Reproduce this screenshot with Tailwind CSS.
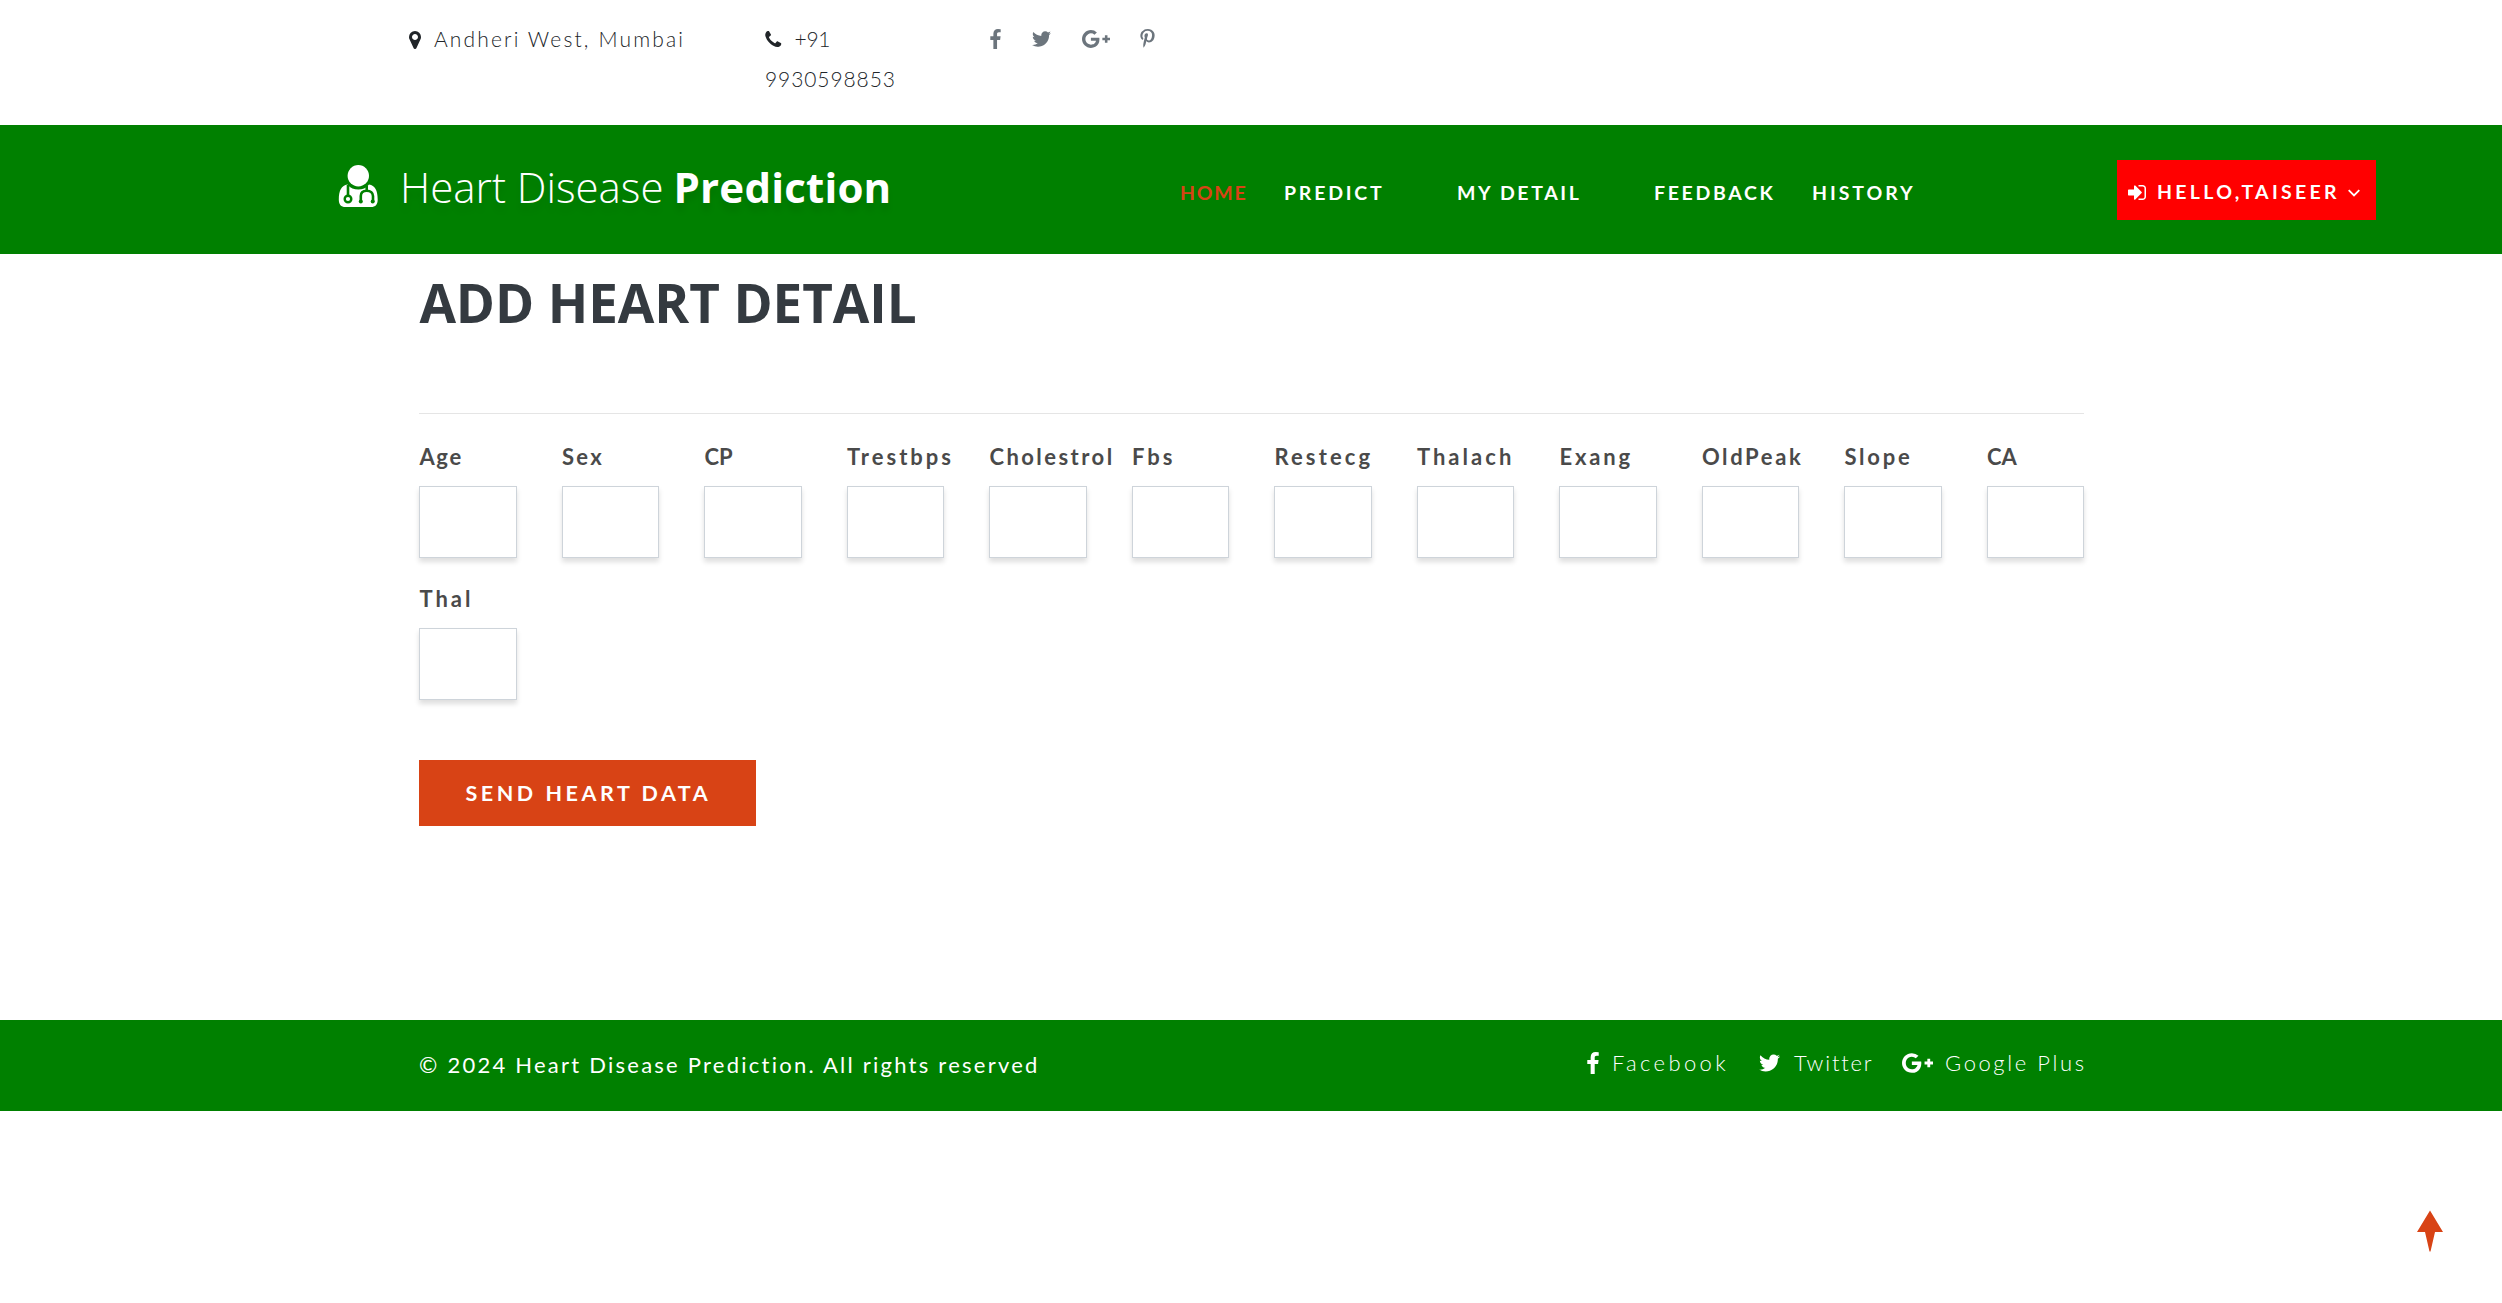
<!DOCTYPE html>
<html lang="en">
<head>
<meta charset="utf-8">
<title>Heart Disease Prediction</title>
<script src="https://cdn.jsdelivr.net/npm/@tailwindcss/browser@4"></script>
</head>
<body class="min-h-screen bg-white font-['Lato',sans-serif] text-[#4a4a4a] overflow-x-hidden">
<svg class="hidden">
  <symbol id="facebook" viewBox="479 0 864 1664"><path d="M1343 12v264h-157q-86 0-116 36t-30 108v189h293l-39 296h-254v759h-306v-759h-255v-296h255v-218q0-186 104-288.5t277-102.5q147 0 228 12z"/></symbol>
  <symbol id="twitter" viewBox="108 256 1576 1280"><path d="M1684 408q-67 98-162 167 1 14 1 42 0 130-38 259.5t-115.5 248.5-184.5 210.5-258 146-323 54.5q-271 0-496-145 35 4 78 4 225 0 401-138-105-2-188-64.5t-114-159.5q33 5 61 5 43 0 85-11-112-23-185.5-111.5t-73.5-205.5v-4q68 38 146 41-66-44-105-115t-39-154q0-88 44-163 121 149 294.5 238.5t371.5 99.5q-8-38-8-74 0-134 94.5-228.5t228.5-94.5q140 0 236 102 109-21 205-78-37 115-142 178 93-10 186-50z"/></symbol>
  <symbol id="gplus" viewBox="0 163 2304 1466"><path d="M1437 913q0 208-87 370.5t-248 254-369 91.5q-149 0-285-58t-234-156-156-234-58-285 58-285 156-234 234-156 285-58q286 0 491 192l-199 191q-117-113-292-113-123 0-227.5 62t-165.5 168.5-61 232.5 61 232.5 165.5 168.5 227.5 62q83 0 152.5-23t114.5-57.5 78.5-78.5 49-83 21.5-74h-416v-252h692q12 63 12 122zm867-122v210h-209v209h-210v-209h-209v-210h209v-209h210v209h209z"/></symbol>
</svg>

<!-- Contact bar -->
<div class="flex h-[125px] pt-[19px] pl-[409px] text-[21px] leading-[40px] font-light text-[#212529]">
  <div class="flex w-[356px] whitespace-nowrap">
    <svg class="mt-[12px] mr-[13px] h-[18px] w-[12px]" fill="currentColor" viewBox="384 128 1024 1536"><path d="M1152 640q0-106-75-181t-181-75-181 75-75 181 75 181 181 75 181-75 75-181zm256 0q0 109-33 179l-364 774q-16 33-47.5 52t-67.5 19-67.5-19-46.5-52l-365-774q-33-70-33-179 0-212 150-362t362-150 362 150 150 362z"/></svg>
    <span class="tracking-[2.15px]">Andheri West, Mumbai</span>
  </div>
  <div class="w-[225px]">
    <div class="flex h-[40px]">
      <svg class="mt-[12px] mr-[13px] h-[16px] w-[16.5px]" fill="currentColor" viewBox="192 128 1408 1408"><path d="M1600 1240q0 27-10 70.5t-21 68.5q-21 50-122 106-94 51-186 51-27 0-53-3.5t-57.5-12.5-47-14.5-55.5-20.5-49-18q-98-35-175-83-127-79-264-216t-216-264q-48-77-83-175-3-9-18-49t-20.5-55.5-14.5-47-12.5-57.5-3.5-53q0-92 51-186 56-101 106-122 25-11 68.5-21t70.5-10q14 0 21 3 18 6 53 76 11 19 30 54t35 63.5 31 53.5q3 4 17.5 25t21.5 35.5 7 28.5q0 20-28.5 50t-62 55-62 53-28.5 46q0 9 5 22.5t8.5 20.5 14 24 11.5 19q76 137 174 235t235 174q2 1 19 11.5t24 14 20.5 8.5 22.5 5q18 0 46-28.5t53-62 55-62 50-28.5q14 0 28.5 7t35.5 21.5 25 17.5q25 15 53.5 31t63.5 35 54 30q70 35 76 53 3 7 3 21z"/></svg>
      <span class="tracking-[-0.3px]">+91</span>
    </div>
    <div class="tracking-[0.9px]">9930598853</div>
  </div>
  <div class="flex h-[40px] items-center text-[#6c757d]">
    <svg class="h-[20px] w-[11px]" fill="currentColor"><use href="#facebook"/></svg>
    <svg class="ml-[31px] h-[16px] w-[19px]" fill="currentColor"><use href="#twitter"/></svg>
    <svg class="ml-[31px] h-[18px] w-[28px]" fill="currentColor"><use href="#gplus"/></svg>
    <svg class="ml-[30px] h-[20px] w-[15px]" fill="currentColor" viewBox="256 0 1280 1792"><path d="M256 597q0-108 37.5-203.5t103.5-166.5 152-123 185-78 202-26q158 0 294 66.5t221 193.5 85 287q0 96-19 188t-60 177-100 149.5-145 103-189 38.5q-68 0-135-32t-96-88q-10 39-28 112.5t-23.5 95-20.5 71-26 71-32 62.5-46 77.5-62 86.5l-14 5-9-10q-15-157-15-188 0-92 21.5-206.5t66.5-287.5 52-203q-32-65-32-169 0-83 52-156t132-73q61 0 95 40.5t34 102.5q0 66-44 191t-44 187q0 63 45 104.5t109 41.5q55 0 102-25t78.5-68 56-95 38-110.5 20-111 6.5-99.5q0-173-109.5-269.5t-285.5-96.5q-200 0-334 129.5t-134 328.5q0 44 12.5 85t27 65 27 45.5 12.5 30.5q0 28-15 73t-37 45q-2 0-17-3-51-15-90.5-56t-61-94.5-32.5-108-11-106.5z"/></svg>
  </div>
</div>

<!-- Main navigation -->
<header class="flex h-[129px] bg-[#008000] pl-[338px] text-white">
  <a class="flex w-[842px] pt-[32px] font-['Open_Sans',sans-serif] text-[42px] leading-[60px] whitespace-nowrap [text-shadow:0_8px_6px_rgb(0_0_0/0.08)]">
    <svg class="mt-[8px] mr-[22px] h-[43px] w-[40px]" viewBox="0 0 40 43">
      <ellipse cx="20.3" cy="10.7" rx="10.7" ry="10.7" fill="#fff"/>
      <path d="M9.5 19.5C3.5 20.5.8 25.5.8 34.5 .8 39.500 3 42 7.500 42H33C37.500 42 39.700 39.500 39.700 34.500 39.700 25.500 37 20.500 31 19.500 28 23.300 24.500 24.600 20.300 24.600S12.500 23.300 9.500 19.500Z" fill="#fff"/>
      <path d="M10 20V31M28.700 20.500V25.500M22.800 37V31Q22.800 25.700 28.700 25.700T35 31V37" fill="none" stroke="#008000" stroke-width="2.600"/>
      <circle cx="10" cy="34" r="3.300" fill="#fff" stroke="#008000" stroke-width="2.400"/>
      <circle cx="22.800" cy="36.500" r="2" fill="#008000"/><circle cx="34.700" cy="36.500" r="2" fill="#008000"/>
    </svg>
    <span class="font-light">Heart Disease</span><span class="ml-[10px] font-bold tracking-[0.2px]">Prediction</span>
  </a>
  <nav class="flex w-[937px] pt-[48px] text-[19.5px] leading-[40px] font-bold whitespace-nowrap">
    <a class="w-[104px] tracking-[1.75px] text-[#d84315]">HOME</a>
    <a class="w-[173px] tracking-[2.78px]">PREDICT</a>
    <a class="w-[197px] tracking-[2.63px]">MY DETAIL</a>
    <a class="w-[158px] tracking-[2.65px]">FEEDBACK</a>
    <a class="tracking-[2.94px]">HISTORY</a>
  </nav>
  <button class="mt-[35px] flex h-[60px] w-[259px] items-center bg-[#ff0000] pl-[11px] text-[19.5px] font-bold whitespace-nowrap">
    <svg class="mt-[4px] h-[15px] w-[18px]" fill="currentColor" viewBox="128 256 1536 1280"><path d="M1312 896q0 26-19 45l-544 544q-19 19-45 19t-45-19-19-45v-288h-448q-26 0-45-19t-19-45v-384q0-26 19-45t45-19h448v-288q0-26 19-45t45-19 45 19l544 544q19 19 19 45zm352-352v704q0 119-84.5 203.5t-203.5 84.5h-320q-13 0-22.500-9.500t-9.500-22.500q0-4-1-20t-.5-26.500 3-23.500 10-19.500 20.500-6.500h320q66 0 113-47t47-113v-704q0-66-47-113t-113-47h-312l-11.500-1-11.500-3-8-5.500-7-9-2-13.500q0-4-1-20t-.5-26.500 3-23.500 10-19.500 20.500-6.500h320q119 0 203.500 84.500t84.500 203.500z"/></svg>
    <span class="mt-[4px] ml-[11px] w-[191px] text-left tracking-[3.3px]">HELLO,TAISEER</span>
    <svg class="mt-[5px] h-[8px] w-[12px]" viewBox="0 0 12 8" fill="none" stroke="currentColor" stroke-width="1.800"><path d="M.7 1.200L6 6.500L11.300 1.200"/></svg>
  </button>
</header>

<!-- Heart detail form -->
<main class="ml-[419.4px] h-[766px] w-[1665px] pt-[19px]">
  <h1 class="font-['Open_Sans',sans-serif] text-[53px] leading-[60px] font-bold tracking-[-0.1px] text-[#343a40]">ADD HEART DETAIL</h1>
  <hr class="mt-[80px] mb-[26px] border-t border-[#e5e5e5]">
  <form>
    <div class="grid grid-cols-12 gap-x-[45px] gap-y-[24px] text-[22px] leading-[33px] font-bold whitespace-nowrap">
      <label><span class="tracking-[1.65px]">Age</span><input class="mt-[13px] block h-[72px] w-full border border-[#ced4da] bg-white shadow-[0_4px_5px_rgb(0_0_0/0.13)]"></label>
      <label><span class="tracking-[2.4px]">Sex</span><input class="mt-[13px] block h-[72px] w-full border border-[#ced4da] bg-white shadow-[0_4px_5px_rgb(0_0_0/0.13)]"></label>
      <label><span class="tracking-[0px]">CP</span><input class="mt-[13px] block h-[72px] w-full border border-[#ced4da] bg-white shadow-[0_4px_5px_rgb(0_0_0/0.13)]"></label>
      <label><span class="tracking-[3px]">Trestbps</span><input class="mt-[13px] block h-[72px] w-full border border-[#ced4da] bg-white shadow-[0_4px_5px_rgb(0_0_0/0.13)]"></label>
      <label><span class="tracking-[2.45px]">Cholestrol</span><input class="mt-[13px] block h-[72px] w-full border border-[#ced4da] bg-white shadow-[0_4px_5px_rgb(0_0_0/0.13)]"></label>
      <label><span class="tracking-[3px]">Fbs</span><input class="mt-[13px] block h-[72px] w-full border border-[#ced4da] bg-white shadow-[0_4px_5px_rgb(0_0_0/0.13)]"></label>
      <label><span class="tracking-[3.15px]">Restecg</span><input class="mt-[13px] block h-[72px] w-full border border-[#ced4da] bg-white shadow-[0_4px_5px_rgb(0_0_0/0.13)]"></label>
      <label><span class="tracking-[3.03px]">Thalach</span><input class="mt-[13px] block h-[72px] w-full border border-[#ced4da] bg-white shadow-[0_4px_5px_rgb(0_0_0/0.13)]"></label>
      <label><span class="tracking-[2.85px]">Exang</span><input class="mt-[13px] block h-[72px] w-full border border-[#ced4da] bg-white shadow-[0_4px_5px_rgb(0_0_0/0.13)]"></label>
      <label><span class="tracking-[2.6px]">OldPeak</span><input class="mt-[13px] block h-[72px] w-full border border-[#ced4da] bg-white shadow-[0_4px_5px_rgb(0_0_0/0.13)]"></label>
      <label><span class="tracking-[2.75px]">Slope</span><input class="mt-[13px] block h-[72px] w-full border border-[#ced4da] bg-white shadow-[0_4px_5px_rgb(0_0_0/0.13)]"></label>
      <label><span class="tracking-[0px]">CA</span><input class="mt-[13px] block h-[72px] w-full border border-[#ced4da] bg-white shadow-[0_4px_5px_rgb(0_0_0/0.13)]"></label>
      <label><span class="tracking-[3px]">Thal</span><input class="mt-[13px] block h-[72px] w-full border border-[#ced4da] bg-white shadow-[0_4px_5px_rgb(0_0_0/0.13)]"></label>
    </div>
    <button type="button" class="mt-[60px] block h-[66px] w-[337px] bg-[#d84315] pl-[46px] text-left text-[21.5px] font-bold tracking-[3.55px] text-white whitespace-nowrap">SEND HEART DATA</button>
  </form>
</main>

<!-- Footer -->
<footer class="flex h-[91px] bg-[#008000] pl-[419px] text-[22px] leading-[40px] text-white whitespace-nowrap">
  <p class="w-[1168px] pt-[25px] font-normal tracking-[2.24px]">© 2024 Heart Disease Prediction. All rights reserved</p>
  <div class="flex h-[40px] items-center mt-[23px] font-light">
    <svg class="h-[22px] w-[12px]" fill="currentColor"><use href="#facebook"/></svg>
    <a class="ml-[13px] w-[147px] tracking-[3.35px]">Facebook</a>
    <svg class="h-[18px] w-[21px]" fill="currentColor"><use href="#twitter"/></svg>
    <a class="ml-[14px] w-[108px] tracking-[1.8px]">Twitter</a>
    <svg class="h-[20px] w-[31px]" fill="currentColor"><use href="#gplus"/></svg>
    <a class="ml-[12px] tracking-[2.6px]">Google Plus</a>
  </div>
</footer>

<!-- Back to top -->
<a class="fixed right-[58px] bottom-[51px] block h-[42px] w-[28px]">
  <svg class="h-[42px] w-[28px]" viewBox="0 0 28 42" fill="#d84315"><path d="M14 0.500L27 22H19L14.500 41.500H13.500L9 22H1Z"/></svg>
</a>
</body>
</html>
